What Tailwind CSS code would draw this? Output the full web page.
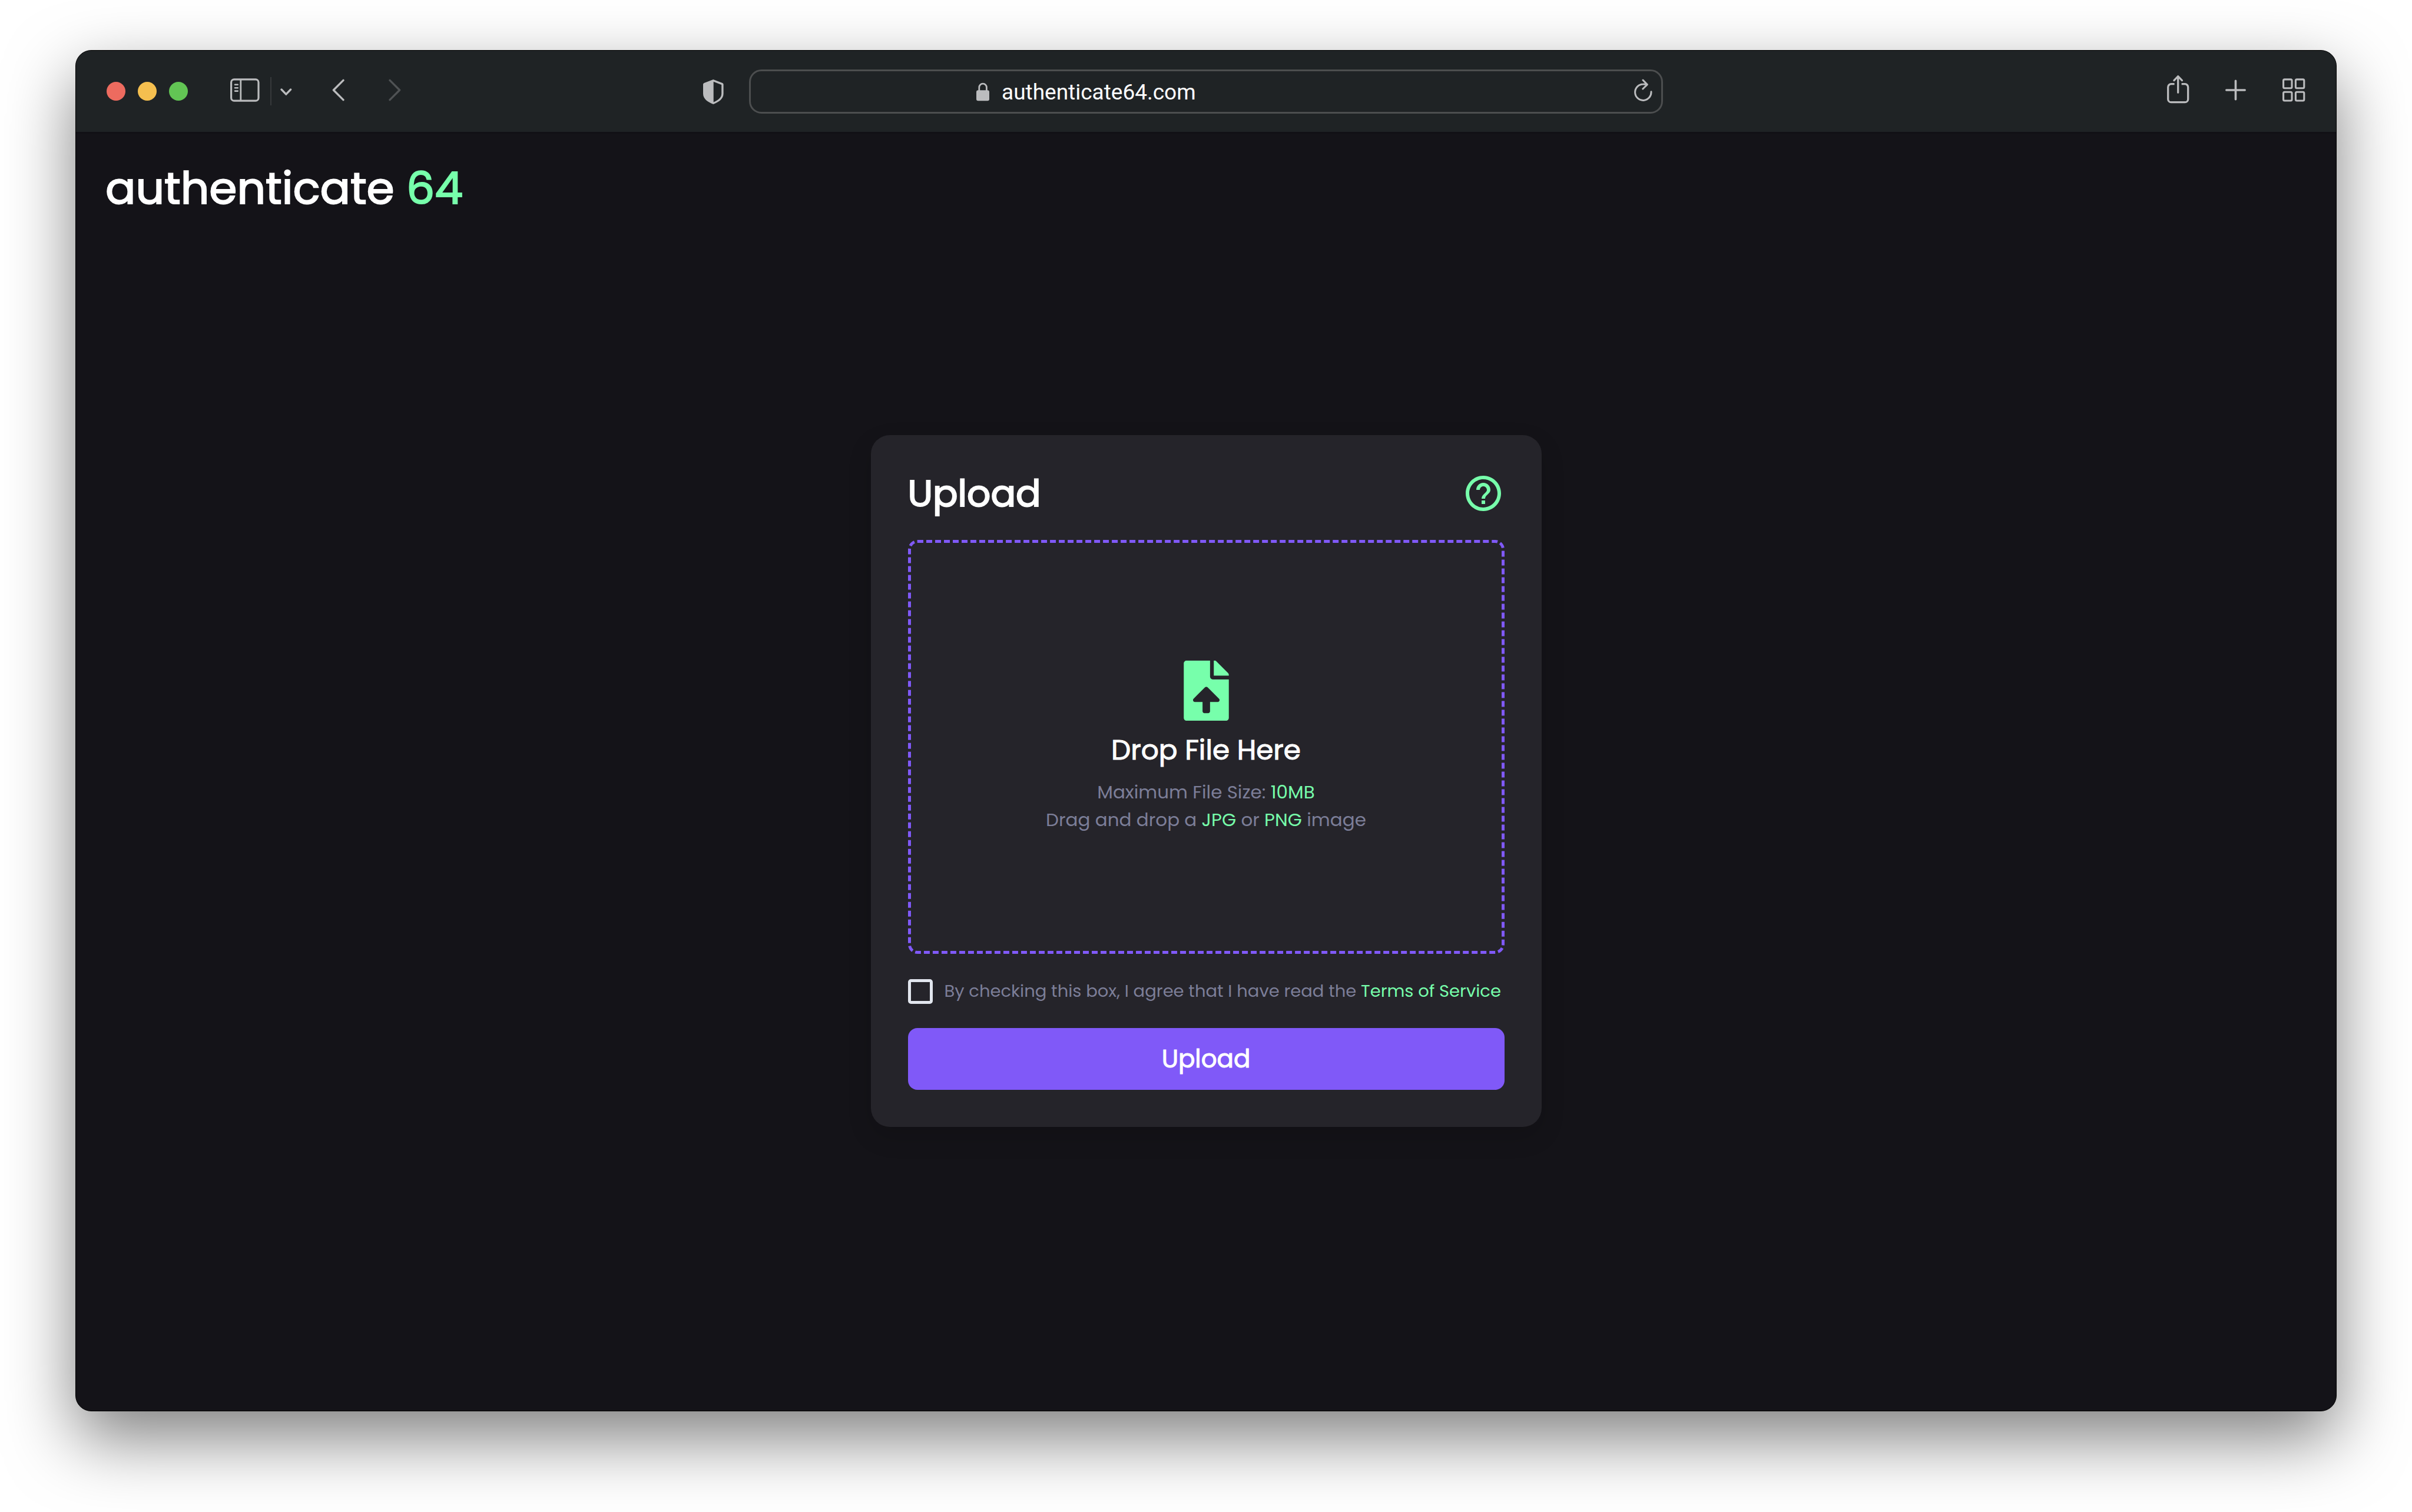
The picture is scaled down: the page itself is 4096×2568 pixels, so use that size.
<!DOCTYPE html>
<html lang="en">
<head>
<meta charset="utf-8">
<meta name="viewport" content="width=device-width, initial-scale=1">
<title>authenticate 64</title>
<script src="https://cdn.jsdelivr.net/npm/@tailwindcss/browser@4"></script>
</head>
<body class="flex min-h-screen flex-col bg-white px-32 pt-[85px] pb-[171px] font-[Poppins,Inter,sans-serif]">

<div class="flex flex-1 flex-col overflow-hidden rounded-[27px] border border-black bg-[#141318] shadow-[0_46px_116px_rgba(0,0,0,0.5)]">

  <!-- Browser toolbar -->
  <div class="grid h-[141px] shrink-0 grid-cols-[1fr_1552px_1fr] items-center border-b-[3px] border-[#111015] bg-[#1f2325] text-[#bbbcbe]">

    <div class="flex items-center pl-[52px] pr-[43px]">
      <div class="flex gap-[21px]">
        <button type="button" aria-label="Close" class="size-8 rounded-full bg-[#ed6b5f]"></button>
        <button type="button" aria-label="Minimize" class="size-8 rounded-full bg-[#f5bf4f]"></button>
        <button type="button" aria-label="Zoom" class="size-8 rounded-full bg-[#62c554]"></button>
      </div>
      <button type="button" aria-label="Sidebar" class="ml-[72px]">
        <svg class="block h-12 w-[50px]" viewBox="0 0 50 48" fill="none" stroke="currentColor" stroke-width="3.2">
          <rect x="1.6" y="3.8" width="46.4" height="36.4" rx="5"/>
          <path d="M17.8 4v36" stroke-width="2.8"/>
          <path d="M8 12.8h4.8M8 18.2h4.8M8 23.6h4.8" stroke-width="2.6" stroke-linecap="round"/>
        </svg>
      </button>
      <div class="ml-[18px] h-12 w-[2px] bg-[#36393b]"></div>
      <button type="button" aria-label="Tab groups" class="ml-[15px]">
        <svg class="block h-12 w-5" viewBox="0 0 20 48" fill="none" stroke="currentColor" stroke-width="3.3" stroke-linecap="round" stroke-linejoin="round"><path d="M2 21l7.8 8.2L17.6 21"/></svg>
      </button>
      <button type="button" aria-label="Back" class="ml-[68px]">
        <svg class="block h-12 w-[21px]" viewBox="0 0 21 48" fill="none" stroke="currentColor" stroke-width="3.4" stroke-linecap="round" stroke-linejoin="round"><path d="M19 5.4L2.4 22 19 38.6"/></svg>
      </button>
      <button type="button" aria-label="Forward" class="ml-[75px] text-[#4f5254]">
        <svg class="block h-12 w-[21px]" viewBox="0 0 21 48" fill="none" stroke="currentColor" stroke-width="3.4" stroke-linecap="round" stroke-linejoin="round"><path d="M2 5.4L18.6 22 2 38.6"/></svg>
      </button>
      <button type="button" aria-label="Privacy report" class="ml-auto">
        <svg class="block h-12 w-[35px]" viewBox="0 0 35 48" fill="currentColor" fill-rule="evenodd"><path d="M17.3 4L33 10q1.6.6 1.6 2.5V28c0 9-7.6 14-17.3 18C7.6 42 0 37 0 28V12.5Q0 10.6 1.6 10ZM17.7 7.8v34.8C25.5 39 31.2 35 31.2 28V13Z"/></svg>
      </button>
    </div>

    <div class="flex h-[75px] items-center rounded-[21px] border-[3px] border-[#4c4e4f] pr-[15px] pl-[383px]">
      <svg class="h-12 w-[22px] shrink-0" viewBox="0 0 22 48" fill="none" stroke="currentColor" stroke-width="2.8">
        <path d="M4.8 24v-6.5a6.3 6.4 0 0 1 12.6 0V24"/>
        <rect x="0" y="22.3" width="22" height="18" rx="3" fill="currentColor" stroke="none"/>
      </svg>
      <input type="text" aria-label="Address" value="authenticate64.com" class="ml-[21px] min-w-0 flex-1 bg-transparent pt-1 font-[Roboto,sans-serif] text-[37px] leading-[48px] text-white outline-none">
      <button type="button" aria-label="Reload">
        <svg class="block h-12 w-[31px]" viewBox="0 0 31 48" fill="none" stroke="currentColor" stroke-width="3" stroke-linecap="round" stroke-linejoin="round"><path d="M29 24.8A13.7 13.7 0 1 1 15.3 12q3.5-.1 6.9.6M15 5l7.3 7.6L14.8 20"/></svg>
      </button>
    </div>

    <div class="flex items-center justify-end pr-[52px]">
      <button type="button" aria-label="Share">
        <svg class="block h-14 w-[38px]" viewBox="0 -4 38 56" fill="none" stroke="currentColor" stroke-width="3.3"><path d="M12.6 11.7H7a5.3 5.3 0 0 0-5.3 5.3v20.4a5.3 5.3 0 0 0 5.3 5.3h23.4a5.3 5.3 0 0 0 5.3-5.3V17a5.3 5.3 0 0 0-5.3-5.3h-5.8"/><path d="M18.7-1.2v27.4M11.9 5.6l6.8-7 6.8 7" stroke-linecap="round" stroke-linejoin="round"/></svg>
      </button>
      <button type="button" aria-label="New tab" class="ml-[61px]">
        <svg class="block h-12 w-[35px]" viewBox="0 0 35 48" fill="none" stroke="currentColor" stroke-width="3.6" stroke-linecap="round"><path d="M17.5 6.2v31.6M1.8 22h31.4"/></svg>
      </button>
      <button type="button" aria-label="Tab overview" class="ml-[62px]">
        <svg class="block h-12 w-[39px]" viewBox="0 0 39 48" fill="none" stroke="currentColor" stroke-width="3.1"><rect x="1.6" y="3.9" width="14.4" height="14.8" rx="2"/><rect x="22.4" y="3.9" width="14.4" height="14.8" rx="2"/><rect x="1.6" y="25.2" width="14.4" height="14.8" rx="2"/><rect x="22.4" y="25.2" width="14.4" height="14.8" rx="2"/></svg>
      </button>
    </div>
  </div>

  <!-- Page -->
  <header class="px-[50px] pt-[53px]">
    <a href="#" class="block text-[76px] leading-[80px] text-white [-webkit-text-stroke:2px]">authenticate <span class="text-[#77ffab]">64</span></a>
  </header>

  <main class="flex flex-1 items-center justify-center pb-[103px]">
    <form class="w-[1139px] rounded-[32px] bg-[#25242a] p-[63px] shadow-[0_16px_40px_rgba(0,0,0,0.15)]">
      <div class="flex h-[72px] items-center justify-between">
        <h1 class="text-[63px] leading-[72px] text-white [-webkit-text-stroke:2px]">Upload</h1>
        <button type="button" aria-label="Help" class="text-[#77ffab]">
          <svg class="block size-[72px]" viewBox="0 0 24 24" fill="currentColor"><path d="M12 2C6.48 2 2 6.48 2 12s4.48 10 10 10 10-4.48 10-10S17.52 2 12 2zm0 18c-4.41 0-8-3.59-8-8s3.59-8 8-8 8 3.59 8 8-3.59 8-8 8z"/><path d="M11 16h2v2h-2zM12 6c-2.21 0-4 1.79-4 4h2c0-1.1.9-2 2-2s2 .9 2 2c0 .55-.3 1-.7 1.4l-1.1 1.1C11.4 13.3 11 14 11 15h2c0-.9.4-1.4 1-2l1-1c.6-.6 1-1.2 1-2 0-2.21-1.79-4-4-4z"/></svg>
        </button>
      </div>

      <label class="mt-[43px] flex h-[703px] flex-col items-center justify-center rounded-2xl border-[5px] border-dashed border-[#8059f8] text-center">
        <input type="file" accept="image/jpeg,image/png" class="sr-only">
        <svg class="h-[102px] w-[77px] text-[#77ffab]" viewBox="0 0 384 512" fill="currentColor"><path d="M224 136V0H24C10.7 0 0 10.7 0 24v464c0 13.3 10.7 24 24 24h336c13.3 0 24-10.7 24-24V160H248c-13.2 0-24-10.8-24-24zm65.18 216.01H224v80c0 8.84-7.16 16-16 16h-32c-8.84 0-16-7.16-16-16v-80H94.82c-14.28 0-21.41-17.29-11.27-27.36l96.42-95.7c6.65-6.61 17.39-6.61 24.04 0l96.42 95.7c10.15 10.07 3.03 27.36-11.25 27.36zM377 105L279.1 7c-4.5-4.5-10.6-7-17-7H256v128h128v-6.1c0-6.3-2.5-12.4-7-16.9z"/></svg>
        <span class="mt-[18px] text-[47px] leading-[64px] text-white [-webkit-text-stroke:1px]">Drop File Here</span>
        <span class="mt-4 text-[31px] leading-[47px] text-[#7c7e98]">Maximum File Size: <span class="text-[#77ffab]">10MB</span></span>
        <span class="text-[31px] leading-[47px] text-[#7c7e98]">Drag and drop a <span class="text-[#77ffab]">JPG</span> or <span class="text-[#77ffab]">PNG</span> image</span>
      </label>

      <div class="mt-[42px] flex h-[43px] items-center gap-5">
        <input id="terms" type="checkbox" class="size-[42px] shrink-0 appearance-none rounded-[5px] border-[5px] border-[#e2e6ee] checked:bg-[#8059f8]">
        <label for="terms" class="text-[29px] leading-[43px] whitespace-nowrap text-[#7c7e98]">By checking this box, I agree that I have read the <a href="#" class="text-[#77ffab]">Terms of Service</a></label>
      </div>

      <button type="submit" class="mt-[41px] h-[105px] w-full rounded-2xl bg-[#8059f8] text-[42px] leading-[64px] text-white [-webkit-text-stroke:1px]">Upload</button>
    </form>
  </main>
</div>

</body>
</html>
